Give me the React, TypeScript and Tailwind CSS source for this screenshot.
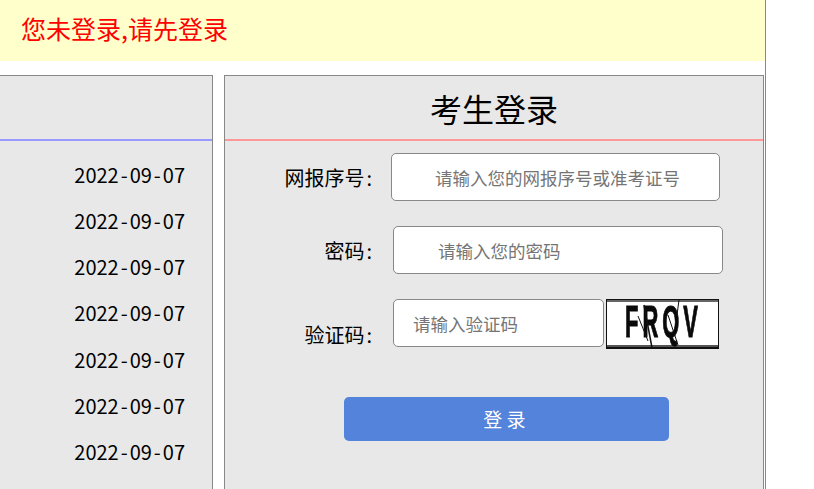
const cjk = "font-['Noto_Sans_CJK_SC','Liberation_Sans',sans-serif]";

function Captcha() {
  return (
    <svg width="113" height="50" viewBox="0 0 113 50" className="block shrink-0 ml-[2px]">
      <rect width="113" height="50" fill="#fff" />
      <rect x="0" y="0" width="113" height="1" fill="#111" />
      <rect x="0" y="1" width="113" height="2" fill="#666" />
      <rect x="0" y="46" width="113" height="2" fill="#555" />
      <rect x="0" y="48" width="113" height="2" fill="#111" />
      <rect x="0" y="0" width="1" height="50" fill="#111" />
      <rect x="112" y="0" width="1" height="50" fill="#111" />
      <text
        className="blur-[0.35px]"
        x="19"
        y="38"
        fontFamily="Liberation Sans"
        fontWeight="700"
        fontSize="44"
        letterSpacing="8"
        fill="#0a0a0a"
        stroke="#0a0a0a"
        strokeWidth="1"
        textLength="77"
        lengthAdjust="spacingAndGlyphs"
      >
        FRQV
      </text>
      <g stroke="#111" fill="none">
        <path d="M32 17 L42 42" strokeWidth="1" />
        <path d="M38 6 L46 49" strokeWidth="1.5" />
        <path d="M62 16 L72 46" strokeWidth="1" />
        <path d="M73 1 L71 16" strokeWidth="1" />
      </g>
    </svg>
  );
}

const dates = [0, 1, 2, 3, 4, 5, 6];

export default function App() {
  return (
    <div className={`w-[766px] h-screen overflow-hidden bg-white border-r border-[#888] text-black ${cjk}`}>
      <div className="h-[61px] bg-[#ffffcc] pl-[21px] pb-[5px] flex items-center text-[25px] leading-none text-[#ff0000]">
        您未登录,请先登录
      </div>
      <div className="flex mt-[14px] gap-[11px] h-[600px]">
        <div className="w-[213px] shrink-0 border border-l-0 border-[#888] bg-[#e8e8e8]">
          <div className="h-[65px] border-b-2 border-[#9999ff]" />
          <div className="pt-[20px] pr-[27px] flex flex-col items-end gap-[18.15px] text-[20px] leading-[28px]">
            {dates.map((d) => (
              <div key={d}>
                2022<span className="mx-[2px]">-</span>09<span className="mx-[2px]">-</span>07
              </div>
            ))}
          </div>
        </div>
        <div className="w-[540px] shrink-0 border border-[#888] bg-[#e8e8e8]">
          <div className="h-[65px] border-b-2 border-[#ff9999] flex items-center justify-center text-[32px] leading-none pt-[1px]">
            考生登录
          </div>
          <div className="pt-[12px] text-[20px] leading-[28px]">
            <div className="flex items-center">
              <label className="w-[148px] text-right pr-[1px] pt-[2px]">
                网报序号<span className="ml-[2px]">:</span>
              </label>
              <input
                placeholder="请输入您的网报序号或准考证号"
                className="ml-[18px] w-[329px] h-[48px] bg-white border border-[#888] rounded-[5px] pl-[43px] text-[17.5px] placeholder:text-[#757575] outline-none"
              />
            </div>
            <div className="flex items-center mt-[25px]">
              <label className="w-[148px] text-right pr-[1px] pt-[2px]">
                密码<span className="ml-[2px]">:</span>
              </label>
              <input
                placeholder="请输入您的密码"
                className="ml-[20px] w-[330px] h-[48px] bg-white border border-[#888] rounded-[5px] pl-[44px] text-[17.5px] placeholder:text-[#757575] outline-none"
              />
            </div>
            <div className="flex items-start mt-[25px]">
              <label className="w-[148px] text-right pr-[1px] pt-[22px]">
                验证码<span className="ml-[2px]">:</span>
              </label>
              <input
                placeholder="请输入验证码"
                className="ml-[20px] w-[211px] h-[48px] bg-white border border-[#888] rounded-[5px] pl-[19px] text-[17.5px] placeholder:text-[#757575] outline-none"
              />
              <Captcha />
            </div>
            <button className="block ml-[119px] mt-[48px] w-[325px] h-[44px] rounded-[5px] bg-[#5383db] text-white text-[19px] leading-none pr-[4px] pb-[2px]">
              登 录
            </button>
          </div>
        </div>
      </div>
    </div>
  );
}
